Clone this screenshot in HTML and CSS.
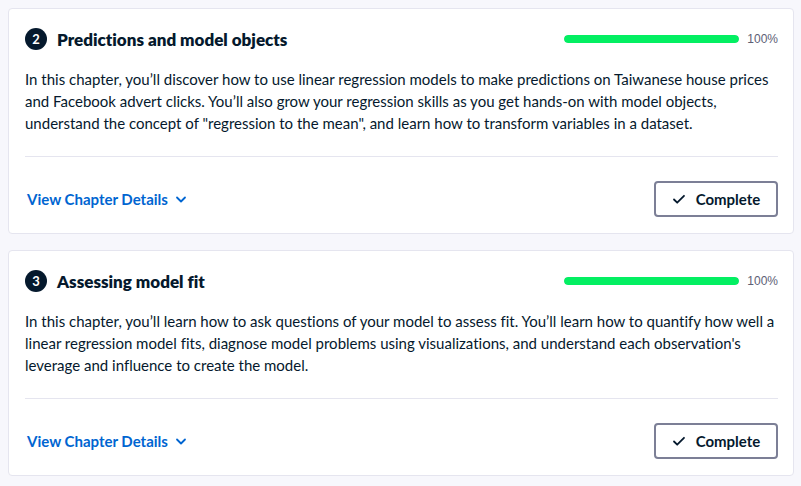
FILE: index.html
```html
<!DOCTYPE html>
<html lang="en">
<head>
<meta charset="utf-8">
<link rel="stylesheet" href="styles.css">
</head>
<body>
<div class="list">
  <section class="card">
    <div class="head">
      <span class="num">2</span>
      <h3 class="title">Predictions and model objects</h3>
      <div class="progress"><div class="bar"><div class="fill" style="width:100%"></div></div><span class="pct">100%</span></div>
    </div>
    <p class="desc">In this chapter, you’ll discover how to use linear regression models to make predictions on Taiwanese house prices and Facebook advert clicks. You’ll also grow your regression skills as you get hands-on with model objects, understand the concept of "regression to the mean", and learn how to transform variables in a dataset.</p>
    <div class="foot">
      <a class="details">View Chapter Details <svg width="14" height="14" viewBox="0 0 14 14"><path d="M3 5.5l4 4 4-4" fill="none" stroke="#0065d1" stroke-width="1.8" stroke-linecap="round" stroke-linejoin="round"/></svg></a>
      <button class="done"><svg width="14" height="14" viewBox="0 0 14 14"><path d="M2 7.5l3.2 3.2L12 3.8" fill="none" stroke="#05192d" stroke-width="1.8" stroke-linecap="round" stroke-linejoin="round"/></svg>Complete</button>
    </div>
  </section>
  <section class="card">
    <div class="head">
      <span class="num">3</span>
      <h3 class="title">Assessing model fit</h3>
      <div class="progress"><div class="bar"><div class="fill" style="width:100%"></div></div><span class="pct">100%</span></div>
    </div>
    <p class="desc">In this chapter, you’ll learn how to ask questions of your model to assess fit. You’ll learn how to quantify how well a linear regression model fits, diagnose model problems using visualizations, and understand each observation's leverage and influence to create the model.</p>
    <div class="foot">
      <a class="details">View Chapter Details <svg width="14" height="14" viewBox="0 0 14 14"><path d="M3 5.5l4 4 4-4" fill="none" stroke="#0065d1" stroke-width="1.8" stroke-linecap="round" stroke-linejoin="round"/></svg></a>
      <button class="done"><svg width="14" height="14" viewBox="0 0 14 14"><path d="M2 7.5l3.2 3.2L12 3.8" fill="none" stroke="#05192d" stroke-width="1.8" stroke-linecap="round" stroke-linejoin="round"/></svg>Complete</button>
    </div>
  </section>
</div>
</body>
</html>
```
FILE: styles.css
```css
html, body { margin: 0; padding: 0; }
body {
  background: #f7f7fc;
  font-family: "Lato", "Liberation Sans", sans-serif;
  color: #05192d;
  font-variant-ligatures: none;
}
.list {
  padding: 8px 7px 8px 8px;
  display: flex;
  flex-direction: column;
  gap: 16px;
}
.card {
  background: #fff;
  border: 1px solid #e5e5ef;
  border-radius: 4px;
  padding: 16px 15px 16px 16px;
}
.head {
  display: flex;
  align-items: center;
  height: 28px;
}
.num {
  width: 22px;
  height: 22px;
  border-radius: 50%;
  background: #05192d;
  color: #fff;
  font-weight: 700;
  font-size: 13px;
  display: flex;
  align-items: center;
  justify-content: center;
  margin: 0 10px 0 0;
}
.title {
  margin: 0;
  font-size: 17px;
  font-weight: 800;
  flex: 1;
}
.progress {
  display: flex;
  align-items: center;
  gap: 8px;
}
.bar {
  width: 175px;
  height: 8px;
  border-radius: 4px;
  background: #e5e5ef;
  overflow: hidden;
}
.fill { height: 100%; background: #03ef62; border-radius: 4px; }
.pct {
  font-family: "Liberation Sans", Arial, sans-serif;
  font-size: 12px;
  color: #5d6075;
}
.desc {
  margin: 15px 0 0;
  font-size: 15px;
  line-height: 22px;
  padding-bottom: 22px;
  border-bottom: 1px solid #e5e5ef;
}
.foot {
  display: flex;
  align-items: center;
  justify-content: space-between;
  margin-top: 24px;
}
.details {
  color: #0065d1;
  font-weight: 700;
  font-size: 15px;
  display: flex;
  align-items: center;
  gap: 6px;
  margin-left: 2px;
  cursor: pointer;
}
.done {
  display: flex;
  align-items: center;
  gap: 10px;
  height: 36px;
  width: 124px;
  justify-content: center;
  background: #fff;
  border: 2px solid #7c7f96;
  border-radius: 4px;
  font-family: inherit;
  font-weight: 700;
  font-size: 15px;
  color: #05192d;
}
```
